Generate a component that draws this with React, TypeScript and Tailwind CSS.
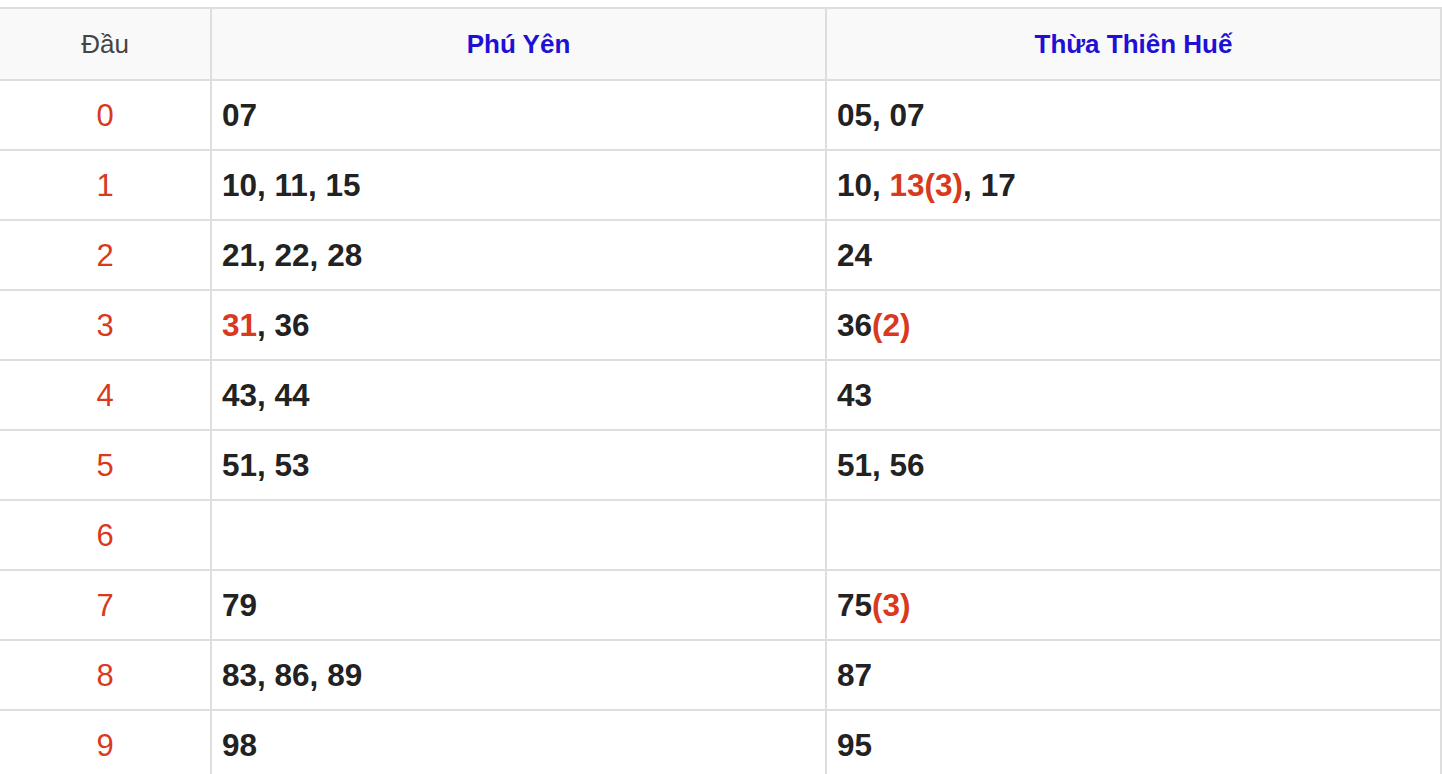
import React from "react";

type Part = { t: string; red?: boolean };

const rows: { head: string; py: Part[][]; hue: Part[][] }[] = [
  { head: "0", py: [[{ t: "07" }]], hue: [[{ t: "05" }], [{ t: "07" }]] },
  {
    head: "1",
    py: [[{ t: "10" }], [{ t: "11" }], [{ t: "15" }]],
    hue: [[{ t: "10" }], [{ t: "13(3)", red: true }], [{ t: "17" }]],
  },
  { head: "2", py: [[{ t: "21" }], [{ t: "22" }], [{ t: "28" }]], hue: [[{ t: "24" }]] },
  {
    head: "3",
    py: [[{ t: "31", red: true }], [{ t: "36" }]],
    hue: [[{ t: "36" }, { t: "(2)", red: true }]],
  },
  { head: "4", py: [[{ t: "43" }], [{ t: "44" }]], hue: [[{ t: "43" }]] },
  { head: "5", py: [[{ t: "51" }], [{ t: "53" }]], hue: [[{ t: "51" }], [{ t: "56" }]] },
  { head: "6", py: [], hue: [] },
  { head: "7", py: [[{ t: "79" }]], hue: [[{ t: "75" }, { t: "(3)", red: true }]] },
  { head: "8", py: [[{ t: "83" }], [{ t: "86" }], [{ t: "89" }]], hue: [[{ t: "87" }]] },
  { head: "9", py: [[{ t: "98" }]], hue: [[{ t: "95" }]] },
];

const Loto = ({ items }: { items: Part[][] }) => (
  <span>
    {items.map((item, i) => (
      <React.Fragment key={i}>
        {i > 0 && ", "}
        {item.map((p, j) => (
          <span key={j} className={p.red ? "text-[#d9391d]" : ""}>
            {p.t}
          </span>
        ))}
      </React.Fragment>
    ))}
  </span>
);

export default function App() {
  return (
    <div
      className="w-[1442px] bg-white pt-[7px]"
      style={{ fontFamily: '"Liberation Sans", Arial, sans-serif' }}
    >
      <div className="grid grid-cols-[212px_615px_1fr] border-t-2 border-[#dedede]">
        <div className="h-[72px] flex items-center justify-center bg-[#f9f9f9] border-b-2 border-r-2 border-[#dedede] text-[26px] text-[#444]">
          Đầu
        </div>
        <div className="h-[72px] flex items-center justify-center bg-[#f9f9f9] border-b-2 border-r-2 border-[#dedede] text-[26px] font-bold text-[#1f10d4]">
          Phú Yên
        </div>
        <div className="h-[72px] flex items-center justify-center bg-[#f9f9f9] border-b-2 border-r-2 border-[#dedede] text-[26px] font-bold text-[#1f10d4]">
          Thừa Thiên Huế
        </div>

        {rows.map((r) => (
          <React.Fragment key={r.head}>
            <div className="h-[70px] flex items-center justify-center pt-[2px] border-b-2 border-r-2 border-[#dedede] text-[31px] text-[#d9391d]">
              {r.head}
            </div>
            <div className="h-[70px] flex items-center pl-[10px] pt-[2px] border-b-2 border-r-2 border-[#dedede] text-[31.5px] font-bold text-[#222]">
              <Loto items={r.py} />
            </div>
            <div className="h-[70px] flex items-center pl-[10px] pt-[2px] border-b-2 border-r-2 border-[#dedede] text-[31.5px] font-bold text-[#222]">
              <Loto items={r.hue} />
            </div>
          </React.Fragment>
        ))}
      </div>
    </div>
  );
}
